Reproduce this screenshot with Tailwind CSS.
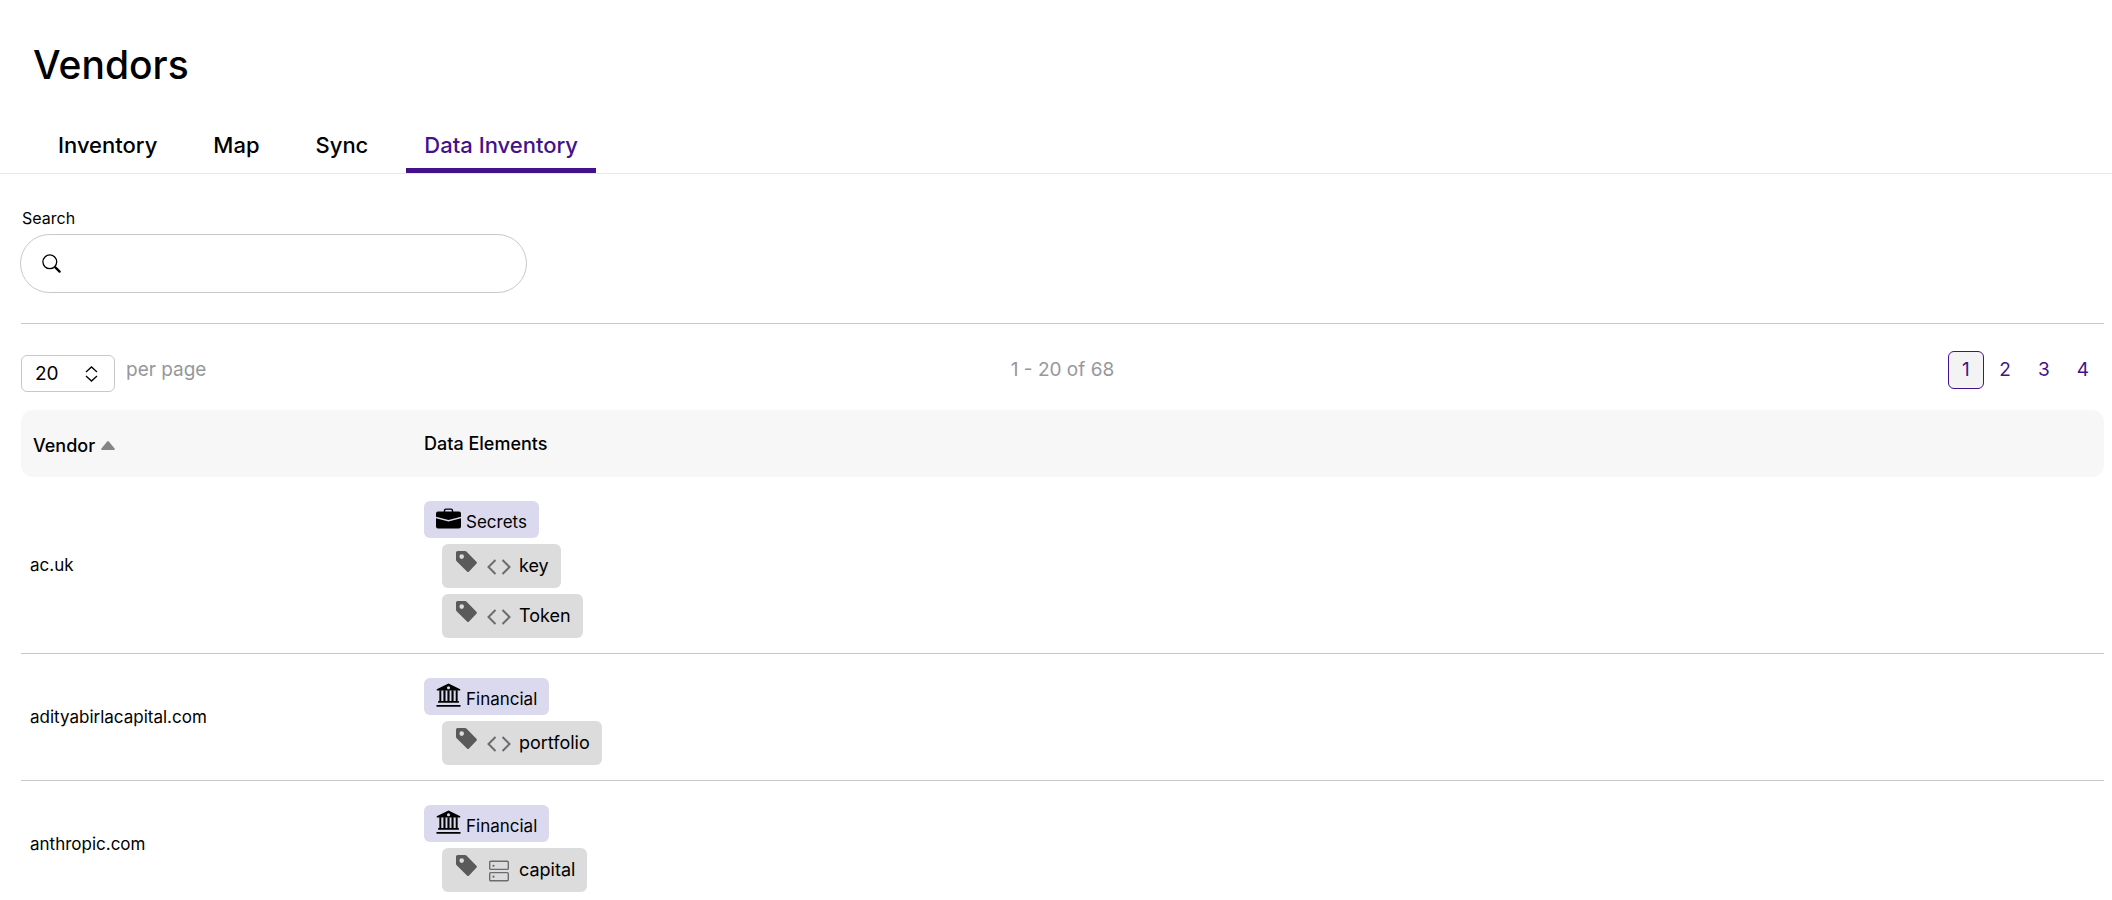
<!DOCTYPE html>
<html lang="en">
<head>
<meta charset="utf-8">
<meta name="viewport" content="width=device-width, initial-scale=1">
<title>Vendors</title>
<script src="https://cdn.jsdelivr.net/npm/@tailwindcss/browser@4"></script>
</head>
<body class="bg-white text-black font-[Inter,sans-serif] overflow-x-hidden">
<svg class="hidden" aria-hidden="true">
  <symbol id="briefcase" viewBox="0 0 25 21">
    <path d="M8.500 4V2.600q0-1.500 1.500-1.500h5q1.500 0 1.500 1.500V4" fill="none" stroke="currentColor" stroke-width="1.400"/>
    <path d="M2 3.500h21q2 0 2 2v3.200l-12.500 3.300L0 8.700V5.500q0-2 2-2z"/>
    <path d="M0 10.200l12.500 3.300L25 10.200V18.500q0 2-2 2H2q-2 0-2-2z"/>
  </symbol>
  <symbol id="bank" viewBox="0 0 26 26">
    <path fill-rule="evenodd" d="M13 0.500L25.200 6.400V7.900H.8V6.400zM13 3.300a1.600 1.600 0 1 0 0 3.200a1.600 1.600 0 1 0 0-3.200z"/>
    <path d="M3.500 7.500h2v12h-2zM7.700 7.500h2.200v12H7.700zM11.900 7.500h2.200v12h-2.200zM16.100 7.500h2.200v12h-2.200zM20.500 7.500h2v12h-2zM2.200 18.800h21.600v1.800H2.200zM.5 23h25v1.800H.5z"/>
  </symbol>
  <symbol id="tag" viewBox="0 0 21 21">
    <path fill-rule="evenodd" d="M0 1.500Q0 0 1.500 0H9q.8 0 1.400.6l10 10.200q1 1 0 2l-7.400 7.600q-1 1-2 0L.6 10.200Q0 9.600 0 8.800zM5.700 3.300a2.300 2.300 0 1 0 0 4.600a2.300 2.300 0 1 0 0-4.600z"/>
  </symbol>
  <symbol id="code" viewBox="0 0 24 16">
    <path d="M8.500 1L1.500 8l7 7M15.500 1L22.500 8l-7 7" fill="none" stroke="currentColor" stroke-width="2"/>
  </symbol>
  <symbol id="server" viewBox="0 0 24 22">
    <g fill="none" stroke="currentColor" stroke-width="1.400"><rect x="2.700" y="1.200" width="18.600" height="8.200" rx="1"/><rect x="2.700" y="12.600" width="18.600" height="8.200" rx="1"/></g>
    <circle cx="6.500" cy="5.800" r="1.100"/><circle cx="6.500" cy="16.700" r="1.100"/>
  </symbol>
</svg>

<header>
  <h1 class="px-[33px] pt-10 text-[39px] leading-[50px] font-medium">Vendors</h1>
  <nav class="mt-9 flex gap-5 border-b border-[#e8e8e8] px-10 text-[22px] leading-7 font-medium" aria-label="Vendor views">
    <a href="#" class="px-[18px] pt-[5px] pb-[14px]">Inventory</a>
    <a href="#" class="px-[18px] pt-[5px] pb-[14px]">Map</a>
    <a href="#" class="px-[18px] pt-[5px] pb-[14px]">Sync</a>
    <a href="#" aria-current="page" class="border-b-5 border-[#43128a] px-[18px] pt-[5px] pb-[9px] text-[#43128a]">Data Inventory</a>
  </nav>
</header>

<main class="pt-8 pr-2 pl-[21px]">
  <div class="-ml-px max-w-[507px]">
    <label for="search" class="block pb-1 pl-[2px] text-base leading-6">Search</label>
    <div class="flex h-[59px] items-center gap-3 rounded-full border border-[#c8c8c8] px-[21px]">
      <svg class="size-[19px] shrink-0" viewBox="0 0 19 19" fill="none" stroke="black" aria-hidden="true"><circle cx="7.800" cy="7.800" r="6.900" stroke-width="1.300"/><path d="M12.800 12.800l1 1" stroke-width="1.300"/><path d="M13.600 13.600l4 4" stroke-width="2.300" stroke-linecap="round"/></svg>
      <input id="search" type="search" class="h-full min-w-0 flex-1 text-lg outline-none">
    </div>
  </div>

  <hr class="mt-[30px] border-t border-[#c8c8c8]">

  <div class="grid grid-cols-3 items-start pt-[27px] text-[19px] leading-[38px] text-[#97979b]">
    <div class="flex items-start gap-[11px]">
      <div class="relative mt-1 text-black">
        <select id="per-page" class="block h-[37px] w-[94px] appearance-none rounded-md border border-[#c8c8c8] bg-white pl-[13px] text-[19px] leading-[35px]"><option>20</option><option>50</option><option>100</option></select>
        <svg class="pointer-events-none absolute top-[11px] right-[17px] h-4 w-[13px]" viewBox="0 0 13 16" fill="none" stroke="black" stroke-width="1.300" aria-hidden="true"><path d="M1 6l5.500-5L12 6M1 10l5.500 5L12 10"/></svg>
      </div>
      <label for="per-page">per page</label>
    </div>
    <p class="text-center">1 - 20 of 68</p>
    <nav class="flex justify-end gap-[3px] pr-[3px] text-[#43128a]" aria-label="Pagination">
      <a href="#" aria-current="page" class="w-9 rounded-md border border-[#43128a] bg-[#f3f3f3] text-center leading-9">1</a>
      <a href="#" class="w-9 text-center">2</a>
      <a href="#" class="w-9 text-center">3</a>
      <a href="#" class="w-9 text-center">4</a>
    </nav>
  </div>

  <table class="mt-[18px] w-full table-fixed border-separate border-spacing-0 text-left text-lg leading-6">
    <thead>
      <tr class="h-[67px] font-medium">
        <th scope="col" aria-sort="ascending" class="w-[403px] rounded-l-xl bg-[#f7f7f7] pt-1 pl-3 font-medium">
          <button type="button" class="flex items-center gap-[6px]">Vendor <svg class="h-[9px] w-[14px]" viewBox="0 0 14 9" fill="#858585" aria-hidden="true"><path d="M6.200.4q.8-.8 1.600 0l5.800 7q.8 1.600-.8 1.600H1.200Q-.4 9 .4 7.400z"/></svg></button>
        </th>
        <th scope="col" class="rounded-r-xl bg-[#f7f7f7] font-medium">Data Elements</th>
      </tr>
    </thead>
    <tbody>
      <tr>
        <td class="border-b border-[#c8c8c8] pl-[9px] text-[17px]">ac.uk</td>
        <td class="border-b border-[#c8c8c8] pt-6 pb-[15px]">
          <div class="flex flex-col items-start gap-[6px]">
            <div class="flex h-[37px] items-start gap-[5px] rounded-md bg-[#dbd9ee] px-3 text-[17px]"><svg class="mt-[7px] h-[21px] w-[25px]" fill="currentColor" aria-hidden="true"><use href="#briefcase"/></svg><span class="pt-[9px]">Secrets</span></div>
            <div class="ml-[18px] flex h-11 items-center rounded-md bg-[#dcdcdc] pr-3 pl-[14px]"><svg class="mt-[7px] size-[21px] self-start text-[#5a5a5a]" fill="currentColor" aria-hidden="true"><use href="#tag"/></svg><svg class="mt-[2px] ml-[10px] h-4 w-6 text-[#6b6c70]" aria-hidden="true"><use href="#code"/></svg><span class="ml-2">key</span></div>
            <div class="ml-[18px] flex h-11 items-center rounded-md bg-[#dcdcdc] pr-3 pl-[14px]"><svg class="mt-[7px] size-[21px] self-start text-[#5a5a5a]" fill="currentColor" aria-hidden="true"><use href="#tag"/></svg><svg class="mt-[2px] ml-[10px] h-4 w-6 text-[#6b6c70]" aria-hidden="true"><use href="#code"/></svg><span class="ml-2">Token</span></div>
          </div>
        </td>
      </tr>
      <tr>
        <td class="border-b border-[#c8c8c8] pl-[9px] text-[17px]">adityabirlacapital.com</td>
        <td class="border-b border-[#c8c8c8] pt-6 pb-[15px]">
          <div class="flex flex-col items-start gap-[6px]">
            <div class="flex h-[37px] items-start gap-[5px] rounded-md bg-[#dbd9ee] px-3 text-[17px]"><svg class="mt-[5px] size-[25px]" fill="currentColor" aria-hidden="true"><use href="#bank"/></svg><span class="pt-[9px]">Financial</span></div>
            <div class="ml-[18px] flex h-11 items-center rounded-md bg-[#dcdcdc] pr-3 pl-[14px]"><svg class="mt-[7px] size-[21px] self-start text-[#5a5a5a]" fill="currentColor" aria-hidden="true"><use href="#tag"/></svg><svg class="mt-[2px] ml-[10px] h-4 w-6 text-[#6b6c70]" aria-hidden="true"><use href="#code"/></svg><span class="ml-2">portfolio</span></div>
          </div>
        </td>
      </tr>
      <tr>
        <td class="border-b border-[#c8c8c8] pl-[9px] text-[17px]">anthropic.com</td>
        <td class="border-b border-[#c8c8c8] pt-6 pb-[15px]">
          <div class="flex flex-col items-start gap-[6px]">
            <div class="flex h-[37px] items-start gap-[5px] rounded-md bg-[#dbd9ee] px-3 text-[17px]"><svg class="mt-[5px] size-[25px]" fill="currentColor" aria-hidden="true"><use href="#bank"/></svg><span class="pt-[9px]">Financial</span></div>
            <div class="ml-[18px] flex h-11 items-center rounded-md bg-[#dcdcdc] pr-3 pl-[14px]"><svg class="mt-[7px] size-[21px] self-start text-[#5a5a5a]" fill="currentColor" aria-hidden="true"><use href="#tag"/></svg><svg class="mt-[2px] ml-[10px] h-[22px] w-6 text-[#6b6c70]" fill="currentColor" aria-hidden="true"><use href="#server"/></svg><span class="ml-2">capital</span></div>
          </div>
        </td>
      </tr>
    </tbody>
  </table>
</main>
</body>
</html>
